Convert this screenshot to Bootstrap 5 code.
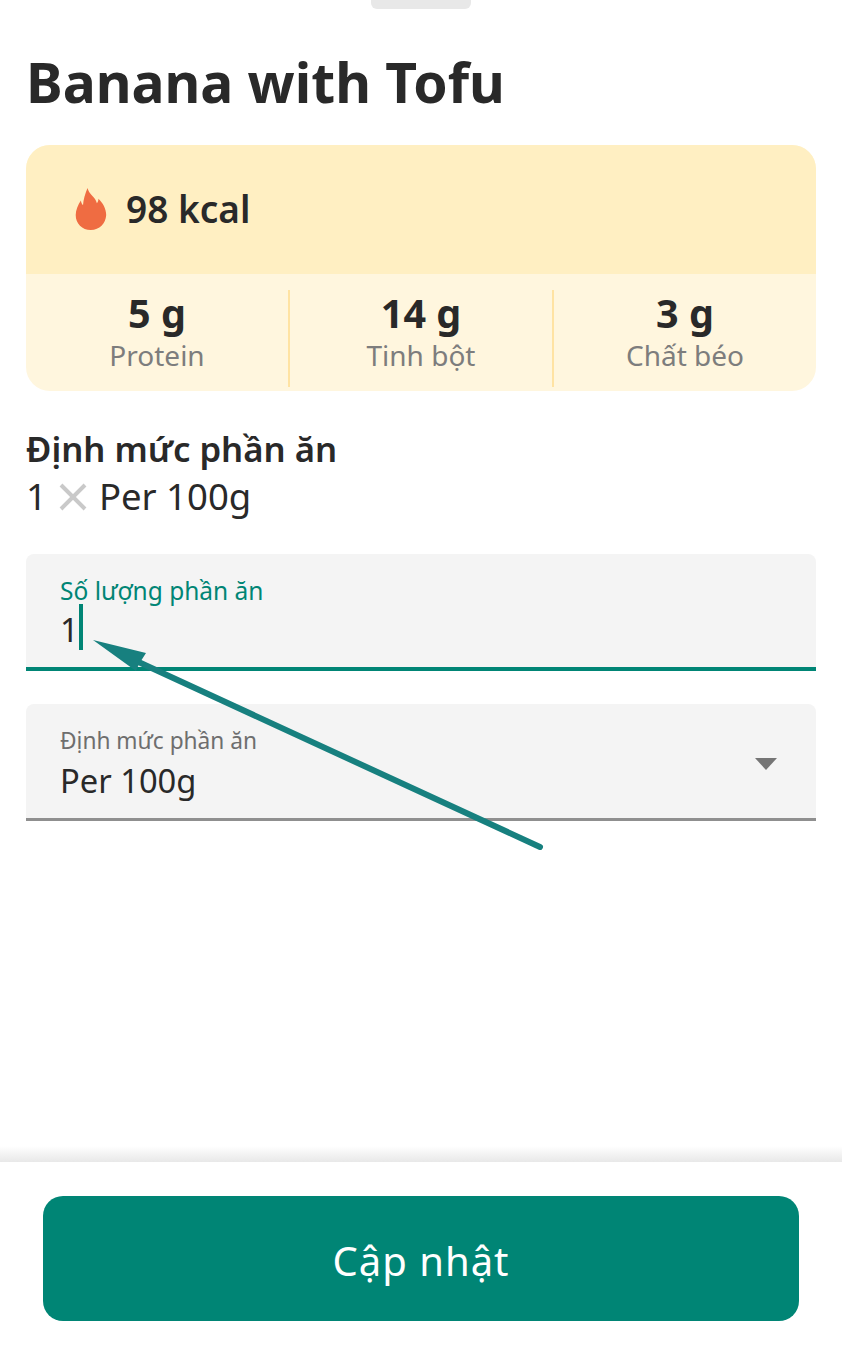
<!DOCTYPE html>
<html lang="vi">
<head>
<meta charset="utf-8">
<title>Banana with Tofu</title>
<link href="https://cdn.jsdelivr.net/npm/bootstrap@5.3.0/dist/css/bootstrap.min.css" rel="stylesheet">
<style>
html,body{height:100%}
body{font-family:"Noto Sans","Liberation Sans",sans-serif;color:#292929;background:#fff;width:842px;height:1350px;overflow:hidden;position:relative}
.sheet-handle{width:100px;height:9px;background:#e8e8e8;border-radius:0 0 6px 6px}
.dish-title{font-size:55.100px;font-weight:700;line-height:66px;margin:0}
.title-wrap{padding:40px 26px 0;}
.nutri-box{margin:30px 26px 0;border-radius:24px;overflow:hidden;background:#fff6de}
.kcal-row{height:129px;background:#ffefc2;padding:0 0 2px 49px;gap:19px}
.kcal-txt{font-size:37px;font-weight:600;line-height:1}
.macro-row{height:117px;padding:16px 0 4px}
.macro-col{flex:1 1 0;text-align:center;border-right:2px solid #ffe3a3}
.macro-col:last-child{border-right:0}
.macro-val{font-size:39.500px;font-weight:700;line-height:46px}
.macro-lab{font-size:28px;line-height:30px;color:#7d7d7d;margin-top:4px}
.serv-wrap{padding:35px 26px 0}
.serv-head{font-size:34.700px;font-weight:600;line-height:46px}
.serv-val{font-size:36.500px;line-height:48px}
.serv-x{margin:0 11px 0 11px;vertical-align:-2px}
.field-box{margin:0 26px;background:#f4f4f4;border-radius:8px 8px 0 0;padding:0 34px;position:relative}
.field-a{margin-top:34px;height:117px;border-bottom:4px solid #008575}
.field-b{margin-top:33px;height:117px;border-bottom:3px solid #8f8f8f}
.field-lab{font-size:24.500px;line-height:30px;padding-top:22px;color:#008575}
.field-b .field-lab{color:#6e6e6e;font-size:22.700px}
.field-val{font-size:32.700px;line-height:40px;margin-top:4px}
.field-b .field-val{margin-top:5px}
.caret-bar{display:inline-block;width:4px;height:46px;background:#008575;vertical-align:top;margin-top:-6px;margin-left:0}
.select-tri{position:absolute;right:39px;top:54px;width:0;height:0;border-left:11px solid transparent;border-right:11px solid transparent;border-top:12px solid #757575}
.foot-bar{position:absolute;left:0;right:0;bottom:0;height:188px;background:#fff;padding:34px 43px 0}
.foot-shade{position:absolute;left:0;right:0;top:-16px;height:16px;background:linear-gradient(to bottom,rgba(232,232,232,0),rgba(232,232,232,1))}
.save-btn{width:100%;height:125px;background:#008575;border:0;border-radius:20px;color:#fff;font-size:40px;letter-spacing:1px;padding:5px 0 0}
.save-btn:hover{background:#008575;color:#fff}
.arrow-ov{position:absolute;left:0;top:0;pointer-events:none}
</style>
</head>
<body>
<div class="d-flex justify-content-center"><div class="sheet-handle"></div></div>
<div class="title-wrap"><h1 class="dish-title">Banana with Tofu</h1></div>
<div class="nutri-box">
  <div class="kcal-row d-flex align-items-center">
    <svg width="32" height="42" viewBox="0 0 32 42" aria-hidden="true"><path fill="#ef6c42" d="M12.500 0c1 4.500 4.500 7 7.500 11 .8 1.200 1.400 2.600 1.900 4.300 1-1.300 1.500-2.800 1.600-4.500 4.300 4.200 7.700 10 7.700 16.200C30.700 35.500 24.500 42 15.800 42S.7 35.800.7 27c0-5 2.400-10.300 5.200-14.500 .3 2 1 3.500 2.100 4.800C8.400 11.500 10 6 12.500 0z"/></svg>
    <span class="kcal-txt">98 kcal</span>
  </div>
  <div class="macro-row d-flex">
    <div class="macro-col"><div class="macro-val">5 g</div><div class="macro-lab">Protein</div></div>
    <div class="macro-col"><div class="macro-val">14 g</div><div class="macro-lab">Tinh bột</div></div>
    <div class="macro-col"><div class="macro-val">3 g</div><div class="macro-lab">Chất béo</div></div>
  </div>
</div>
<div class="serv-wrap">
  <div class="serv-head">Định mức phần ăn</div>
  <div class="serv-val">1<svg class="serv-x" width="30" height="30" viewBox="0 0 30 30" aria-hidden="true"><path d="M3 3l24 24M27 3L3 27" stroke="#c9c9c9" stroke-width="4" fill="none"/></svg>Per 100g</div>
</div>
<div class="field-box field-a">
  <div class="field-lab">Số lượng phần ăn</div>
  <div class="field-val">1<span class="caret-bar"></span></div>
</div>
<div class="field-box field-b">
  <div class="field-lab">Định mức phần ăn</div>
  <div class="field-val">Per 100g</div>
  <span class="select-tri"></span>
</div>
<div class="foot-bar">
  <div class="foot-shade"></div>
  <button class="btn save-btn" type="button">Cập nhật</button>
</div>
<svg class="arrow-ov" width="842" height="1350" viewBox="0 0 842 1350" aria-hidden="true">
  <path d="M540 847L132 659" stroke="#17807f" stroke-width="6" stroke-linecap="round" fill="none"/>
  <path d="M93 640L146 653 139 664 136 671z" fill="#17807f"/>
</svg>
</body>
</html>
